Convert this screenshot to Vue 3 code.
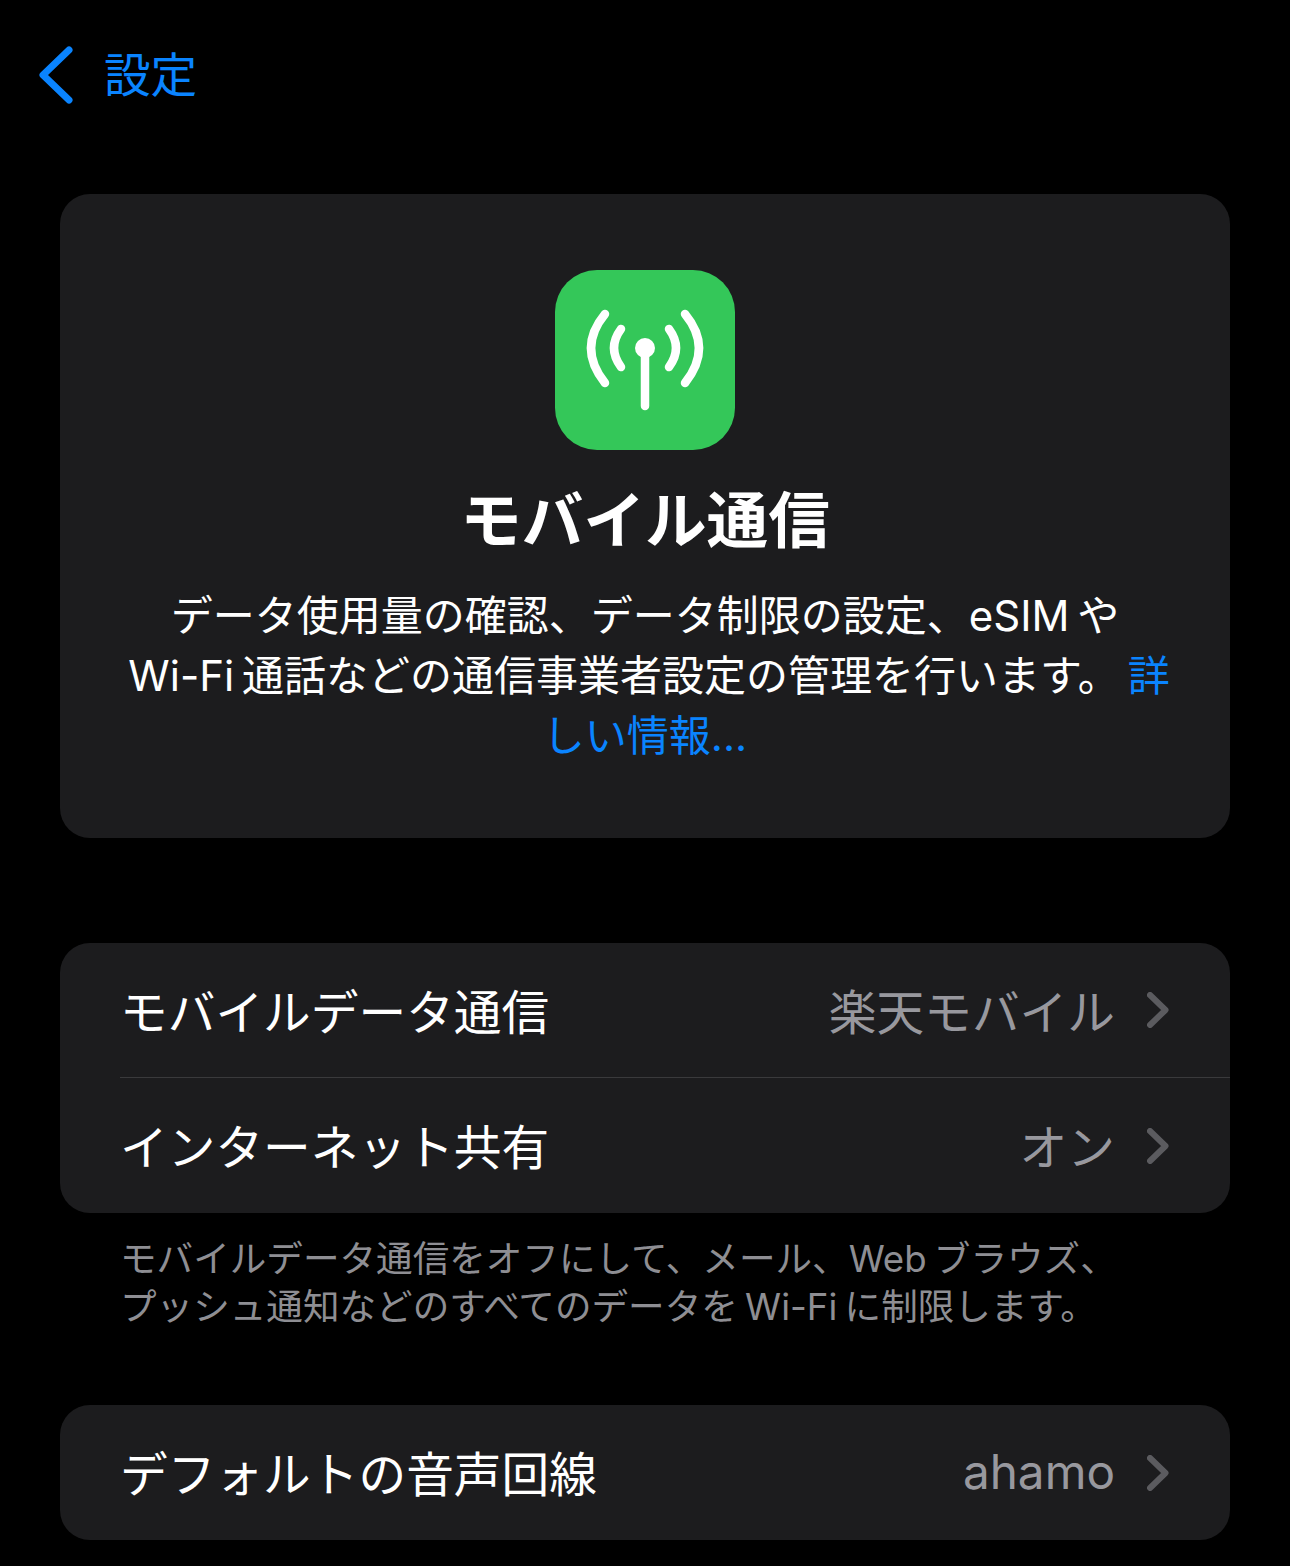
<script setup>
const groups = [
  [
    { label: 'モバイルデータ通信', value: '楽天モバイル' },
    { label: 'インターネット共有', value: 'オン' }
  ]
]
const voice = { label: 'デフォルトの音声回線', value: 'ahamo' }
</script>

<template>
  <div class="page">
    <header class="nav">
      <svg class="back" viewBox="0 0 36 58" fill="none">
        <path d="M31 4 L5 29 L31 54" stroke="#0a84ff" stroke-width="7" stroke-linecap="round" stroke-linejoin="round" />
      </svg>
      <span class="nav-title">設定</span>
    </header>

    <section class="hero">
      <div class="app-icon">
        <svg viewBox="0 0 180 180" fill="none" stroke="#fff" stroke-linecap="round" stroke-width="8.5" width="180" height="180">
          <path d="M50 44 Q22 78 50 113" />
          <path d="M130 44 Q158 78 130 113" />
          <path d="M66 59 Q52 78 66 97" />
          <path d="M114 59 Q128 78 114 97" />
          <path d="M90 80 L90 136" />
          <circle cx="90" cy="78" r="10" fill="#fff" stroke="none" />
        </svg>
      </div>
      <h1 class="hero-title">モバイル通信</h1>
      <p class="hero-text">
        データ使用量の確認、データ制限の設定、eSIM や<br />
        <span class="line-two">Wi-Fi 通話などの通信事業者設定の管理を行います。 <span class="link">詳</span></span><br />
        <span class="link">しい情報...</span>
      </p>
    </section>

    <section v-for="(rows, g) in groups" :key="g" class="list">
      <div v-for="row in rows" :key="row.label" class="row">
        <span class="row-label">{{ row.label }}</span>
        <span class="row-value">{{ row.value }}</span>
        <svg class="chev" viewBox="0 0 22 36" fill="none">
          <path d="M3 3 L18.5 18 L3 33" stroke="#5b5b5f" stroke-width="6" stroke-linecap="round" stroke-linejoin="round" />
        </svg>
      </div>
    </section>

    <p class="note">
      モバイルデータ通信をオフにして、メール、Web ブラウズ、<br />
      プッシュ通知などのすべてのデータを Wi-Fi に制限します。
    </p>

    <section class="list last">
      <div class="row">
        <span class="row-label">{{ voice.label }}</span>
        <span class="row-value">{{ voice.value }}</span>
        <svg class="chev" viewBox="0 0 22 36" fill="none">
          <path d="M3 3 L18.5 18 L3 33" stroke="#5b5b5f" stroke-width="6" stroke-linecap="round" stroke-linejoin="round" />
        </svg>
      </div>
    </section>
  </div>
</template>

<style>
body {
  background: #000;
}
</style>

<style scoped>
.page {
  width: 1290px;
  height: 1566px;
  overflow: hidden;
  box-sizing: border-box;
  padding: 0 60px;
  background: #000;
  font-family: "Inter", "Noto Sans CJK JP", sans-serif;
  color: #fff;
}

.nav {
  height: 194px;
  box-sizing: border-box;
  padding-top: 46px;
  margin-left: -60px;
  padding-left: 38px;
  display: flex;
  align-items: flex-start;
}

.back {
  width: 36px;
  height: 58px;
}

.nav-title {
  margin-left: 30px;
  font-size: 46.6px;
  line-height: 58px;
  color: #0a84ff;
}

.hero {
  height: 644px;
  box-sizing: border-box;
  padding-top: 76px;
  background: #1c1c1e;
  border-radius: 30px;
  display: flex;
  flex-direction: column;
  align-items: center;
}

.app-icon {
  width: 180px;
  height: 180px;
  border-radius: 42px;
  background: #34c759;
}

.app-icon svg {
  display: block;
}

.hero-title {
  margin: 31px 0 0;
  font-size: 61.6px;
  line-height: 80px;
  font-weight: 700;
}

.hero-text {
  margin: 25px 0 0;
  font-size: 42px;
  line-height: 60px;
  text-align: center;
  white-space: nowrap;
  word-spacing: -4px;
}

.line-two {
  padding-left: 8px;
}

.link {
  color: #0a84ff;
}

.list {
  margin-top: 105px;
  background: #1c1c1e;
  border-radius: 30px;
  overflow: hidden;
}

.list.last {
  margin-top: 74px;
}

.row {
  height: 135px;
  box-sizing: border-box;
  margin-left: 60px;
  padding-right: 61px;
  display: flex;
  align-items: center;
}

.row:not(:last-child) {
  border-bottom: 1px solid #3a3a3c;
}

.row-label {
  flex: 1;
  margin-top: -2px;
  font-size: 47.7px;
  white-space: nowrap;
}

.row-value {
  margin-top: -2px;
  font-size: 47.7px;
  color: #98989e;
  white-space: nowrap;
}

.chev {
  width: 22px;
  height: 36px;
  margin-left: 32px;
}

.note {
  margin: 22px 0 0 60px;
  font-size: 36.6px;
  line-height: 48px;
  color: #8e8e93;
  white-space: nowrap;
  word-spacing: -3px;
}
</style>
